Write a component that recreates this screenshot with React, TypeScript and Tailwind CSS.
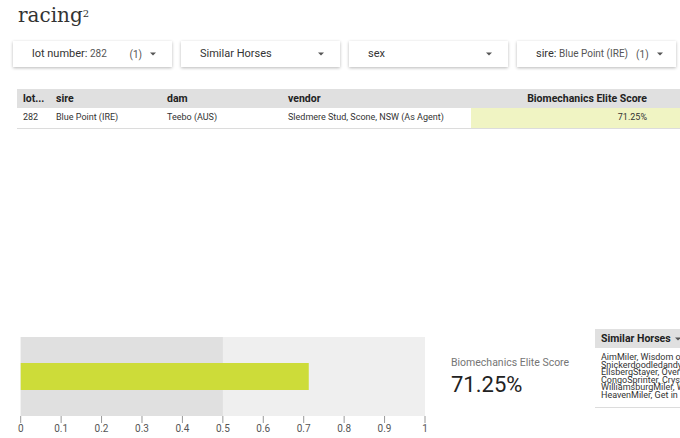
import React from "react";

type Filter = {
  label: string;
  value?: string;
  count?: number;
};

const filters: Filter[] = [
  { label: "lot number:", value: "282", count: 1 },
  { label: "Similar Horses" },
  { label: "sex" },
  { label: "sire:", value: "Blue Point (IRE)", count: 1 },
];

const similarHorses = [
  "AimMiler, Wisdom of Athena, Sweet Caroline",
  "Snickerdoodledandy, Lasting Legacy",
  "EllsbergStayer, Over The Moon, Kinloch",
  "CongoSprinter, Crystal Gaze, Seeking",
  "WilliamsburgMiler, Wiltshire, Elusive",
  "HeavenMiler, Get in Line, Redoute",
];

function Caret() {
  return (
    <svg width="6" height="4" viewBox="0 0 6 4" className="shrink-0">
      <path d="M0 0.5 L6 0.5 L3 3.5 Z" fill="#555" />
    </svg>
  );
}

function FilterSelect({ label, value, count }: Filter) {
  return (
    <div className="flex h-[26px] w-[159px] shrink-0 items-center bg-white pl-[19px] pr-[16px] shadow-[0_1px_3px_rgba(0,0,0,0.28)]">
      <span className="whitespace-nowrap text-[11px] text-[#333]">
        {label}
        {value && <span className="text-[10px] text-[#555]"> {value}</span>}
      </span>
      <div className="ml-auto flex items-center gap-[8px] pl-2">
        {count !== undefined && (
          <span className="text-[10px] text-[#555]">({count})</span>
        )}
        <Caret />
      </div>
    </div>
  );
}

function ResultsTable() {
  return (
    <div className="ml-[17px] mt-[22px] text-[#333]">
      <div className="flex h-[19px] items-center bg-[#e0e0e0] text-[10.5px] font-bold text-[#222]">
        <div className="w-[33px] pl-[6px]">lot...</div>
        <div className="w-[111px] pl-[6px]">sire</div>
        <div className="w-[121px] pl-[6px]">dam</div>
        <div className="w-[189px] pl-[6px]">vendor</div>
        <div className="flex-1 pr-[33px] text-right">Biomechanics Elite Score</div>
      </div>
      <div className="flex h-[21px] items-center border-b border-[#dcdcdc] text-[9px]">
        <div className="w-[33px] pl-[6px]">282</div>
        <div className="w-[111px] pl-[6px]">Blue Point (IRE)</div>
        <div className="w-[121px] pl-[6px]">Teebo (AUS)</div>
        <div className="w-[189px] truncate pl-[6px]">Sledmere Stud, Scone, NSW (As Agent)</div>
        <div className="flex h-full flex-1 items-center justify-end bg-[#f0f4c3] pr-[33px]">
          71.25%
        </div>
      </div>
    </div>
  );
}

function BulletChart({ score }: { score: number }) {
  const x0 = 20.7;
  const span = 404.3;
  const ticks = Array.from({ length: 11 }, (_, i) => i / 10);
  return (
    <svg width="440" height="109" className="shrink-0 overflow-visible">
      <rect x={x0} y={8} width={span} height={79} fill="#efefef" />
      <rect x={x0} y={8} width={span / 2} height={79} fill="#e0e0e0" />
      <rect x={x0} y={34} width={span * score} height={27} fill="#cddc39" />
      {ticks.map((t) => {
        const x = x0 + span * t;
        return (
          <g key={t}>
            <line x1={x} x2={x} y1={87} y2={94} stroke="#999" strokeWidth={1} />
            <text
              x={x}
              y={103}
              textAnchor="middle"
              fontSize="10"
              fill="#555"
              fontFamily="Roboto, sans-serif"
            >
              {t === 0 ? "0" : t === 1 ? "1" : t.toFixed(1)}
            </text>
          </g>
        );
      })}
    </svg>
  );
}

function SimilarHorses() {
  return (
    <div className="ml-auto w-[85px] shrink-0 overflow-hidden border-b border-[#dcdcdc] pb-[8px]">
      <div className="flex h-[19px] items-center justify-between whitespace-nowrap bg-[#e0e0e0] pl-[6px] text-[10.5px] font-bold text-[#222]">
        Similar Horses
        <span className="-mr-[1px]">
          <Caret />
        </span>
      </div>
      <div className="pl-[6px] pt-[6px] text-[9px] leading-[7.5px] text-[#333]">
        {similarHorses.map((line) => (
          <div key={line} className="whitespace-nowrap">
            {line}
          </div>
        ))}
      </div>
    </div>
  );
}

export default function App() {
  const score = 0.7125;
  return (
    <div className="flex h-[438px] w-[680px] flex-col overflow-hidden bg-white font-['Roboto',sans-serif]">
      <div className="h-[41px] pl-[18px]">
        <h1 className="font-['DejaVu_Serif',serif] text-[20px] leading-[30px] text-[#333]">
          racing<sup className="text-[10px]">2</sup>
        </h1>
      </div>

      <div className="flex gap-[9px] pl-[13px]">
        {filters.map((f) => (
          <FilterSelect key={f.label} {...f} />
        ))}
      </div>

      <ResultsTable />

      <div className="mt-auto flex h-[109px] items-start">
        <BulletChart score={score} />
        <div className="ml-[11px] pt-[26px]">
          <div className="text-[10.5px] text-[#757575]">Biomechanics Elite Score</div>
          <div className="mt-[1px] text-[22px] leading-[26px] text-[#222]">71.25%</div>
        </div>
        <SimilarHorses />
      </div>
    </div>
  );
}
